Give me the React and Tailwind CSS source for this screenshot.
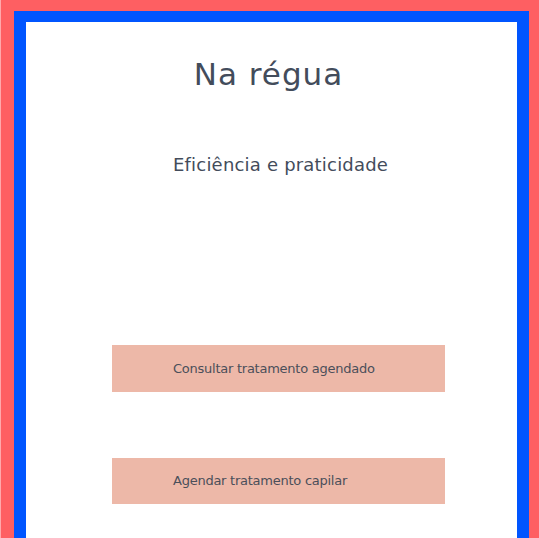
export default function App() {
  return (
    <div className="min-h-[538px] h-[538px] overflow-hidden bg-[#fe5f62] pt-[11px] pl-[13px] pr-[10px] border-l border-[#ffa9ab]" style={{ fontFamily: '"DejaVu Sans", sans-serif' }}>
      <div className="h-[600px] border-[12px] border-t-[11px] border-[#0055ff] bg-white">
        <h1 className="mt-[32px] text-center text-[31px] leading-[40px] tracking-[1px] text-[#434c5b] pr-[6px]">Na régua</h1>
        <p className="mt-[59px] pl-[147px] text-[18px] leading-[24px] tracking-[0.2px] text-[#434c5b]">Eficiência e praticidade</p>
        <div className="mt-[168px] ml-[86px] w-[333px] flex flex-col gap-[66px]">
          <div className="h-[47px] bg-[#edb8a8] flex items-center pl-[61px] text-[13px] tracking-[-0.25px] text-[#4b4f5a]">Consultar tratamento agendado</div>
          <div className="h-[46px] bg-[#edb8a8] flex items-center pl-[61px] text-[13px] tracking-[-0.25px] text-[#4b4f5a]">Agendar tratamento capilar</div>
        </div>
      </div>
    </div>
  );
}
